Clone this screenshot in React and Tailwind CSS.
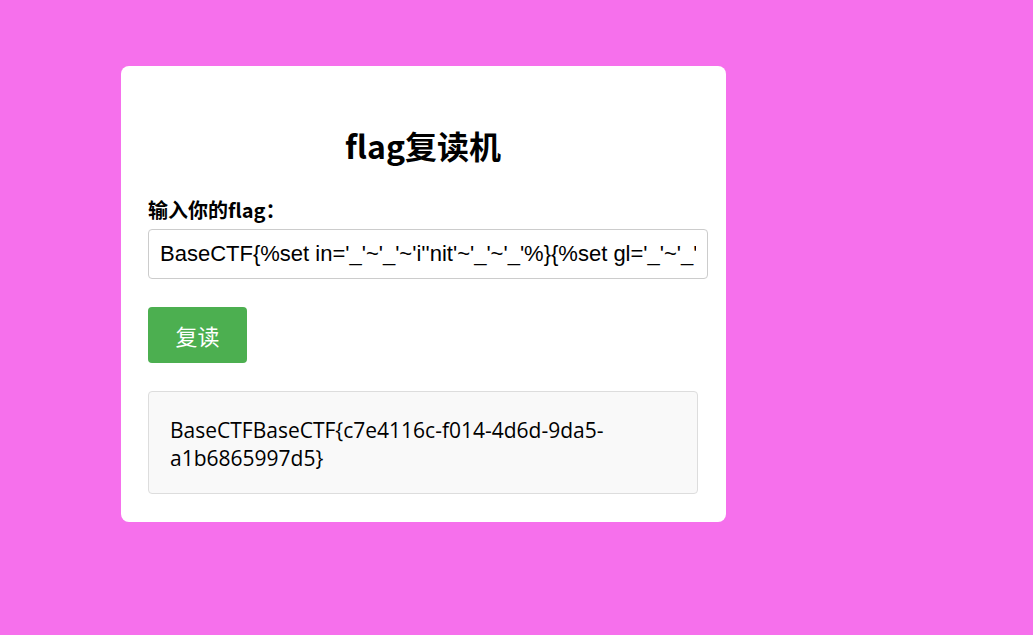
import { useState } from "react";

export default function App() {
  const [flag, setFlag] = useState(
    "BaseCTF{%set in='_'~'_'~'i''nit'~'_'~'_'%}{%set gl='_'~'_'~'glo''bals'~'_'~'_'%}"
  );
  const [result] = useState("BaseCTFBaseCTF{c7e4116c-f014-4d6d-9da5-a1b6865997d5}");

  return (
    <div className="min-h-[635px] w-full bg-[#f670ec] pt-[66px] pl-[121px] font-['Noto_Sans_CJK_SC',sans-serif]">
      <div className="w-[605px] rounded-lg bg-white pt-[59px] pb-[28px] pl-[27px] pr-[28px]">
        <h1 className="text-center text-[32px] font-bold leading-[40px] text-black">flag复读机</h1>

        <label className="mt-[31px] block text-[20px] font-bold leading-[28px] text-black">
          输入你的flag：
        </label>
        <input
          value={flag}
          onChange={(e) => setFlag(e.target.value)}
          className="mt-[5px] block h-[50px] w-[560px] rounded border border-[#cccccc] px-[11px] font-['Liberation_Sans',Arial,sans-serif] text-[22px] text-black outline-none"
        />

        <button className="mt-[28px] h-[56px] w-[99px] rounded bg-[#4caf50] text-[22px] text-white">
          复读
        </button>

        <div className="mt-[28px] w-[550px] rounded border border-[#dddddd] bg-[#f9f9f9] pt-[24px] pb-[21px] px-[21px] font-['Open_Sans','Noto_Sans_CJK_SC',sans-serif] text-[21px] leading-[28px] text-black">
          {result}
        </div>
      </div>
    </div>
  );
}
